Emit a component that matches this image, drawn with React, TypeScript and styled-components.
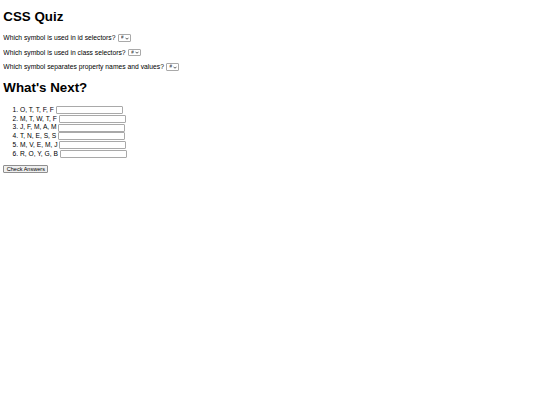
import React from "react";
import styled, { createGlobalStyle } from "styled-components";

const GlobalStyle = createGlobalStyle`
  body {
    margin: 3.33px;
    font-family: "Liberation Sans", Arial, sans-serif;
    font-size: 6.67px;
    color: #000;
    background: #fff;
  }
`;

const Heading = styled.h1`
  font-size: 13.33px;
  font-weight: bold;
  margin: 8px 0 11px;

  &:first-child {
    margin-top: 5.5px;
    margin-bottom: 7px;
  }
`;

const Question = styled.p`
  display: flex;
  align-items: center;
  gap: 2.5px;
  min-height: 10px;
  padding-top: 2px;
  margin: 2.5px 0;
  font-size: 6.75px;
`;

const PickerWrap = styled.span`
  position: relative;
  display: inline-flex;
`;

const Picker = styled.select`
  appearance: none;
  -webkit-appearance: none;
  font-family: "Liberation Sans", Arial, sans-serif;
  font-size: 4.5px;
  width: 13px;
  height: 7.5px;
  padding: 0 0 0 2px;
  margin: 0;
  border: 1px solid #a9a9a9;
  border-radius: 1px;
  background: #fff;
  color: #333;
  line-height: 5px;
`;

const Chevron = styled.svg`
  position: absolute;
  right: 2px;
  top: 2.5px;
  width: 4px;
  height: 3px;
  pointer-events: none;
`;

const Sequence = styled.ol`
  margin: 6.67px 0;
  padding-left: 16.67px;
`;

const Item = styled.li`
  font-size: 6.67px;
  line-height: 8.8px;
  height: 8.8px;
`;

const Answer = styled.input`
  box-sizing: border-box;
  font-family: "Liberation Sans", Arial, sans-serif;
  font-size: 5.56px;
  width: 67px;
  height: 8px;
  padding: 0 1px;
  margin: 0;
  border: 1px solid #a9a9a9;
  border-radius: 1px;
  vertical-align: middle;
`;

const CheckButton = styled.button`
  box-sizing: border-box;
  font-family: "Liberation Sans", Arial, sans-serif;
  font-size: 5.56px;
  width: 45px;
  height: 8px;
  padding: 0;
  border: 1px solid #8f8f8f;
  border-radius: 1px;
  background: #efefef;
  color: #000;
  line-height: 6px;
`;

const questions = [
  "Which symbol is used in id selectors?",
  "Which symbol is used in class selectors?",
  "Which symbol separates property names and values?",
];

const sequences = [
  "O, T, T, F, F",
  "M, T, W, T, F",
  "J, F, M, A, M",
  "T, N, E, S, S",
  "M, V, E, M, J",
  "R, O, Y, G, B",
];

export default function App() {
  return (
    <>
      <GlobalStyle />
      <Heading>CSS Quiz</Heading>
      {questions.map((q) => (
        <Question key={q}>
          {q}
          <PickerWrap>
            <Picker defaultValue="#">
              <option>#</option>
              <option>.</option>
              <option>:</option>
            </Picker>
            <Chevron viewBox="0 0 8 6">
              <path d="M1 1.5 L4 4.5 L7 1.5" fill="none" stroke="#333" strokeWidth="1.6" />
            </Chevron>
          </PickerWrap>
        </Question>
      ))}
      <Heading>What's Next?</Heading>
      <Sequence>
        {sequences.map((s) => (
          <Item key={s}>
            {s} <Answer type="text" />
          </Item>
        ))}
      </Sequence>
      <CheckButton>Check Answers</CheckButton>
    </>
  );
}
